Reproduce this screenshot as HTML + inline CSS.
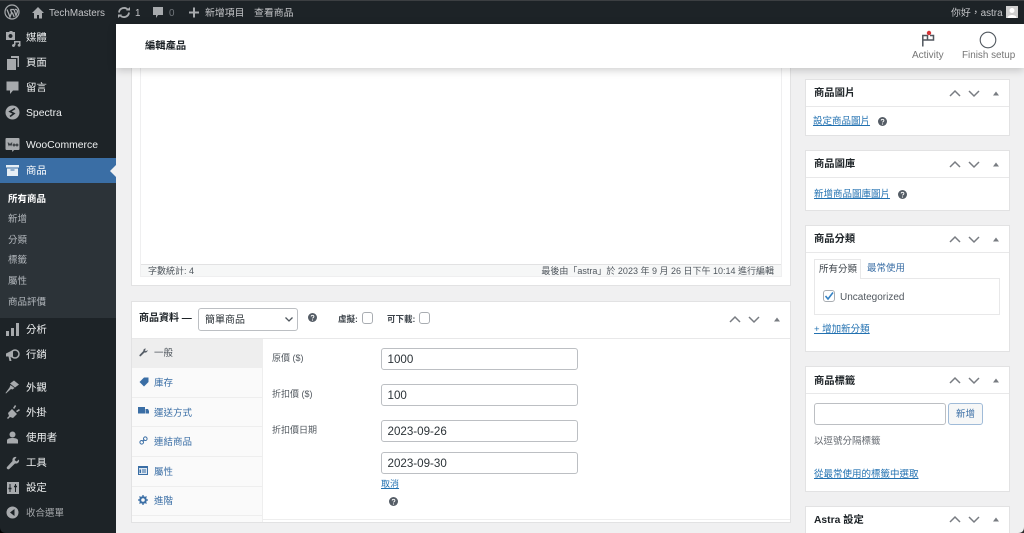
<!DOCTYPE html>
<html lang="zh-Hant"><head><meta charset="utf-8"><title>編輯產品</title>
<style>
*{box-sizing:border-box}
html,body{margin:0;padding:0;background:#f0f0f1}
body{width:1024px;height:533px;overflow:hidden;position:relative;font-family:"Liberation Sans","Noto Sans CJK TC",sans-serif;font-size:10px;color:#3c434a}
#w{position:absolute;left:0;top:0;width:1024px;height:533px;overflow:hidden;background:#f0f0f1;filter:blur(.35px)}
.a{position:absolute;white-space:nowrap}
svg{position:absolute;display:block}
#bar{left:0;top:0;width:1024px;height:24px;background:#1d2327;border-top:1px solid #3c3f42}
.bt{color:#c3c4c7;font-size:9.9px;line-height:12px;top:8px}
#side{left:0;top:24px;width:116px;height:509px;background:#1d2327}
.m{color:#eef0f1;font-size:10.4px;line-height:14px;left:26px}
.s{color:#b4b9be;font-size:9.5px;line-height:12px;left:8px}
.box{background:#fff;border:1px solid #e2e2e3}
.sh{font-weight:bold;color:#1d2327;font-size:10.3px;line-height:14px;left:814px}
.l{color:#2271b1;text-decoration:underline;font-size:9.5px;line-height:12px}
.tab{color:#3a6ea5;font-size:9.5px;line-height:12px;left:154px}
.tl{color:#50575e;font-size:9px;line-height:12px;left:272px}
.in{background:#fff;border:1px solid #bcbfc3;border-radius:3px;left:381px;width:197px;height:22px;color:#2c3338;font-size:11.6px;line-height:22px;padding-left:5.5px}
.hr{background:#e8e8e9;height:1px}
</style></head><body><div id="w">

<div class="a" id="bar"></div>
<svg style="left:4px;top:4px" width="16" height="16" viewBox="0 0 16 16"><circle cx="8" cy="8" r="7" fill="none" stroke="#a7aaad" stroke-width="1.2"/><path d="M3 5.5 6 13 7.6 8.6 6.5 5.5M6.500 5.500h3.500M10 5.500 12 11.500 13.500 7.500C13.500 6 12 5 11 5.500M8.300 8.500 10.200 13" fill="none" stroke="#a7aaad" stroke-width="1.3"/></svg>
<svg style="left:31px;top:6px" width="14" height="13" viewBox="0 0 14 13"><path d="M7 1 1 7h2v5.500h3V9h2v3.500h3V7h2z" fill="#a7aaad"/></svg>
<div class="a bt" style="left:49px">TechMasters</div>
<svg style="left:117px;top:6px" width="14" height="13" viewBox="0 0 14 13"><path d="M2 6.500A5 5 0 0 1 11 4M12 6.500A5 5 0 0 1 3 9" fill="none" stroke="#a7aaad" stroke-width="1.800"/><path d="M9 4.500h4V1zM5 8.500H1V12z" fill="#a7aaad"/></svg>
<div class="a bt" style="left:135px">1</div>
<svg style="left:152px;top:6px" width="12" height="13" viewBox="0 0 12 13"><path d="M1 1h10v8H6l-2 3V9H1z" fill="#a7aaad"/></svg>
<div class="a bt" style="left:169px;color:#72777c">0</div>
<svg style="left:189px;top:7px" width="10" height="11" viewBox="0 0 10 11"><path d="M5 .5v10M0 5.500h10" stroke="#a7aaad" stroke-width="2"/></svg>
<div class="a bt" style="left:205px">新增項目</div>
<div class="a bt" style="left:254px">查看商品</div>
<div class="a bt" style="left:951px">你好，astra</div>
<div class="a" style="left:1006px;top:6px;width:12px;height:12px;background:#cfcfcf"><svg width="12" height="12" viewBox="0 0 12 12"><circle cx="6" cy="4.500" r="2.500" fill="#fff"/><path d="M1.500 12c0-4 9-4 9 0z" fill="#fff"/></svg></div>

<div class="a" id="side"></div>
<svg style="left:5px;top:31px" width="16" height="16" viewBox="0 0 16 16"><path d="M1 1h3l1-1h2l1 1h2v8H1zM5.500 3a2 2 0 1 0 .01 0z" fill="#a7aaad" fill-rule="evenodd"/><path d="M10 14.500a1.500 1.500 0 1 1-1-1.400V10h6.500v3.500a1.500 1.500 0 1 1-1.500-.8V11.500h-3.500V14z" fill="#a7aaad"/></svg>
<div class="a m" style="top:32px">媒體</div>
<svg style="left:6px;top:56px" width="13" height="14" viewBox="0 0 13 14"><path d="M5 0h8v11h-1.500V2H5zM1 3h9v11H1z" fill="#a7aaad"/></svg>
<div class="a m" style="top:57px">頁面</div>
<svg style="left:6px;top:81px" width="13" height="14" viewBox="0 0 13 14"><path d="M.5.500h12v9H7l-3 3.500V9.500H.5z" fill="#a7aaad"/></svg>
<div class="a m" style="top:82px">留言</div>
<svg style="left:5px;top:105px" width="15" height="15" viewBox="0 0 15 15"><circle cx="7.500" cy="7.500" r="7" fill="#a7aaad"/><path d="M10 3.500 5 6.500 9 8.500 5 11.500" fill="none" stroke="#1d2327" stroke-width="1.600"/></svg>
<div class="a m" style="top:107px">Spectra</div>
<svg style="left:5px;top:137px" width="15" height="16" viewBox="0 0 15 16"><path d="M1.500 1h12a1 1 0 0 1 1 1v10a1 1 0 0 1-1 1H9l-1.500 2L7 13H1.500a1 1 0 0 1-1-1V2a1 1 0 0 1 1-1z" fill="#a7aaad"/><path d="M3 5.500l1 3 1-2 1 2 1-3M9 7a1 1 0 1 0 .01 0M12 7a1 1 0 1 0 .01 0" fill="none" stroke="#1d2327" stroke-width=".8"/></svg>
<div class="a m" style="top:139px">WooCommerce</div>
<div class="a" style="left:0;top:158px;width:116px;height:25px;background:#3a6ea5"></div>
<svg style="left:6px;top:165px" width="13" height="12" viewBox="0 0 13 12"><path d="M0 0h13v2.500H0zM1 3.500h11V11H1z" fill="#e6eef5"/><path d="M4.500 5h4" stroke="#3a6ea5"/></svg>
<div class="a m" style="top:165px;color:#fff">商品</div>
<div class="a" style="left:110px;top:165px;width:0;height:0;border:6px solid transparent;border-right-color:#f0f0f1;border-left:0"></div>
<div class="a" style="left:0;top:183px;width:116px;height:135px;background:#2c3338"></div>
<div class="a s" style="top:194px;color:#fff;font-weight:bold">所有商品</div>
<div class="a s" style="top:214px">新增</div>
<div class="a s" style="top:235px">分類</div>
<div class="a s" style="top:255px">標籤</div>
<div class="a s" style="top:276px">屬性</div>
<div class="a s" style="top:297px">商品評價</div>
<svg style="left:6px;top:323px" width="13" height="13" viewBox="0 0 13 13"><path d="M0 8h3v5H0zM5 5h3v8H5zM10 0h3v13h-3z" fill="#a7aaad"/></svg>
<div class="a m" style="top:324px">分析</div>
<svg style="left:5px;top:347px" width="15" height="15" viewBox="0 0 15 15"><path d="M1 6.500 8 3v8L5.500 10 6.500 14H4.500L3.500 9.500H1z" fill="#a7aaad"/><circle cx="10" cy="7" r="4" fill="none" stroke="#a7aaad" stroke-width="1.500"/></svg>
<div class="a m" style="top:349px">行銷</div>
<svg style="left:5px;top:380px" width="15" height="14" viewBox="0 0 15 14"><path d="M9 .500l5 4-4 3-5-4zM5.500 5l4 3-2 1.500L6 9 1 13.500.500 13 4.500 7.500z" fill="#a7aaad"/></svg>
<div class="a m" style="top:382px">外觀</div>
<svg style="left:6px;top:404px" width="14" height="15" viewBox="0 0 14 15"><path d="M1 14l2-2-1-3 4-4 5 5-4 4-3-1-2 2zM7 4l2-3 1.200 1-2 3zM10 7l3-2 1 1.200-3 2z" fill="#a7aaad"/></svg>
<div class="a m" style="top:407px">外掛</div>
<svg style="left:6px;top:431px" width="13" height="13" viewBox="0 0 13 13"><circle cx="6.500" cy="3.500" r="3" fill="#a7aaad"/><path d="M1 12.500V9.500C1 7.500 4 7 6.500 7s5.500.5 5.500 2.500v3z" fill="#a7aaad"/></svg>
<div class="a m" style="top:432px">使用者</div>
<svg style="left:6px;top:456px" width="14" height="14" viewBox="0 0 14 14"><path d="M13 3.500 10.500 5.500 8.500 4 10.500 1C8 .5 6 2 6.500 5L1 11c-1 1.500 1 3 2.300 2L9 7.500c3 .5 4.500-1.500 4-4z" fill="#a7aaad"/></svg>
<div class="a m" style="top:457px">工具</div>
<svg style="left:7px;top:482px" width="12" height="12" viewBox="0 0 12 12"><path d="M0 0h12v12H0z" fill="#a7aaad"/><path d="M3 2v8M8.500 2v8" stroke="#1d2327" stroke-width="1"/><path d="M1.500 6.500h3M7 4.500h3" stroke="#1d2327" stroke-width="1.500"/></svg>
<div class="a m" style="top:482px">設定</div>
<svg style="left:6px;top:506px" width="13" height="13" viewBox="0 0 13 13"><circle cx="6.500" cy="6.500" r="6" fill="#a7aaad"/><path d="M8.500 3v7L4 6.500z" fill="#1d2327"/></svg>
<div class="a m" style="top:507px;color:#a7aaad;font-size:9.500px">收合選單</div>

<!-- main editor box -->
<div class="a box" style="left:131px;top:60px;width:660px;height:226px"></div>
<div class="a" style="left:140px;top:60px;width:642px;height:217px;border:1px solid #efeff0;background:#fff"></div>
<div class="a" style="left:141px;top:264px;width:640px;height:12px;background:#f6f7f7;border-top:1px solid #e2e2e3"></div>
<div class="a" style="left:148px;top:265px;font-size:9px;line-height:12px;color:#50575e">字數統計: 4</div>
<div class="a" style="right:250px;top:265px;font-size:9px;line-height:12px;color:#50575e">最後由「astra」於 2023 年 9 月 26 日下午 10:14 進行編輯</div>

<!-- header -->
<div class="a" style="left:116px;top:24px;width:908px;height:44px;background:#fff;box-shadow:0 2px 8px rgba(0,0,0,.2)"></div>
<div class="a" style="left:145px;top:40px;font-size:10.3px;line-height:14px;font-weight:bold;color:#1d2327">編輯產品</div>
<svg style="left:921px;top:30px" width="14" height="17" viewBox="0 0 14 17"><path d="M1.800 16.500V5.500H6.500V10H2M6.500 10H12.500V5.500H9" fill="none" stroke="#50575e" stroke-width="1.500"/><circle cx="8" cy="3" r="2.200" fill="#d63638"/></svg>
<div class="a" style="left:912px;top:50px;font-size:10px;line-height:12px;color:#757575">Activity</div>
<svg style="left:979px;top:31px" width="18" height="18" viewBox="0 0 18 18"><circle cx="9" cy="9" r="7.800" fill="none" stroke="#50575e" stroke-width="1.100"/></svg>
<div class="a" style="left:962px;top:50px;font-size:9.900px;line-height:12px;color:#757575">Finish setup</div>

<!-- product data -->
<div class="a box" style="left:131px;top:301px;width:660px;height:222px"></div>
<div class="a" style="left:139px;top:312px;font-size:10px;line-height:14px;font-weight:bold;color:#1d2327">商品資料 —</div>
<div class="a" style="left:198px;top:308px;width:100px;height:23px;background:#fff;border:1px solid #bcbfc3;border-radius:3px;font-size:10px;line-height:23px;padding-left:6px;color:#2c3338">簡單商品</div>
<svg style="left:284px;top:316px" width="10" height="7" viewBox="0 0 10 7"><path d="M1.500 1.500 5 5l3.500-3.500" fill="none" stroke="#50575e" stroke-width="1.300"/></svg>
<svg style="left:308px;top:313px" width="9" height="9" viewBox="0 0 9 9"><circle cx="4.500" cy="4.500" r="4.500" fill="#555d66"/><path d="M3.200 3.500c0-1.600 2.700-1.600 2.700 0 0 1-1.300 1-1.300 2" fill="none" stroke="#fff" stroke-width=".9"/><circle cx="4.500" cy="7" r=".6" fill="#fff"/></svg>
<div class="a" style="left:338px;top:313px;font-size:8.500px;line-height:12px;font-weight:bold;color:#3c434a">虛擬:</div>
<div class="a" style="left:362px;top:312px;width:11px;height:12px;border:1px solid #a9adb2;border-radius:3px;background:#fff"></div>
<div class="a" style="left:387px;top:313px;font-size:8.500px;line-height:12px;font-weight:bold;color:#3c434a">可下載:</div>
<div class="a" style="left:419px;top:312px;width:11px;height:12px;border:1px solid #a9adb2;border-radius:3px;background:#fff"></div>
<svg style="left:729px;top:315px" width="56" height="9" viewBox="0 0 56 9"><path d="M1 7l5-5 5 5M20 2l5 5 5-5" fill="none" stroke="#787c82" stroke-width="1.500"/><path d="M45 6.500l3-4 3 4z" fill="#787c82"/></svg>

<div class="a hr" style="left:132px;top:338px;width:658px"></div>
<div class="a" style="left:132px;top:339px;width:131px;height:183px;background:#fafafa;border-right:1px solid #eee"></div>
<div class="a" style="left:132px;top:339px;width:130px;height:29px;background:#eee"></div>
<div class="a hr" style="left:132px;top:397px;width:130px;background:#eee"></div>
<div class="a hr" style="left:132px;top:426px;width:130px;background:#eee"></div>
<div class="a hr" style="left:132px;top:456px;width:130px;background:#eee"></div>
<div class="a hr" style="left:132px;top:486px;width:130px;background:#eee"></div>
<div class="a hr" style="left:132px;top:515px;width:130px;background:#eee"></div>
<svg style="left:139px;top:348px" width="9" height="9" viewBox="0 0 9 9"><path d="M8.500 2 7 3.300 5.800 2.300 7 .7C5.500.2 4.200 1.200 4.300 3L.5 7c-.5.700.5 1.700 1.200 1.200L5.500 4.500C7.500 4.900 8.800 3.500 8.500 2z" fill="#555d66"/></svg>
<div class="a" style="left:154px;top:348px;font-size:9.500px;line-height:12px;color:#50575e">一般</div>
<svg style="left:139px;top:377px" width="10" height="10" viewBox="0 0 10 10"><path d="M5 .5h4.500V5L5 9.500.500 5z" fill="#3a6ea5"/></svg>
<div class="a tab" style="top:378px">庫存</div>
<svg style="left:138px;top:407px" width="11" height="8" viewBox="0 0 11 8"><path d="M0 0h7v6.500H0zM7.500 2H10l1 2v2.500H7.500z" fill="#3a6ea5"/></svg>
<div class="a tab" style="top:408px">運送方式</div>
<svg style="left:139px;top:436px" width="9" height="9" viewBox="0 0 9 9"><path d="M3.500 5.500 5.500 3.500" stroke="#3a6ea5" stroke-width="1"/><circle cx="2.700" cy="6.300" r="1.800" fill="none" stroke="#3a6ea5"/><circle cx="6.300" cy="2.700" r="1.800" fill="none" stroke="#3a6ea5"/></svg>
<div class="a tab" style="top:437px">連結商品</div>
<svg style="left:138px;top:466px" width="10" height="9" viewBox="0 0 10 9"><path d="M0 0h10v9H0z" fill="#3a6ea5"/><path d="M1 2h8v6H1z" fill="#dfe8f1"/><path d="M4 4h4M4 6h4" stroke="#3a6ea5"/><path d="M1.500 3.500h1.500v3.500H1.500z" fill="#3a6ea5"/></svg>
<div class="a tab" style="top:467px">屬性</div>
<svg style="left:138px;top:495px" width="10" height="10" viewBox="0 0 10 10"><circle cx="5" cy="5" r="2.800" fill="none" stroke="#3a6ea5" stroke-width="2"/><path d="M5 0v10M0 5h10M1.500 1.500l7 7M8.500 1.500l-7 7" stroke="#3a6ea5" stroke-width="1.300" stroke-dasharray="1.800 6.400"/></svg>
<div class="a tab" style="top:496px">進階</div>

<div class="a tl" style="top:352px">原價 ($)</div>
<div class="a in" style="top:348px">1000</div>
<div class="a tl" style="top:388px">折扣價 ($)</div>
<div class="a in" style="top:384px">100</div>
<div class="a tl" style="top:424px">折扣價日期</div>
<div class="a in" style="top:420px">2023-09-26</div>
<div class="a in" style="top:452px">2023-09-30</div>
<div class="a l" style="left:381px;top:478px;font-size:9px">取消</div>
<svg style="left:389px;top:497px" width="9" height="9" viewBox="0 0 9 9"><circle cx="4.500" cy="4.500" r="4.500" fill="#555d66"/><path d="M3.200 3.500c0-1.600 2.700-1.600 2.700 0 0 1-1.300 1-1.300 2" fill="none" stroke="#fff" stroke-width=".9"/><circle cx="4.500" cy="7" r=".6" fill="#fff"/></svg>
<div class="a hr" style="left:263px;top:519px;width:527px;background:#eee"></div>

<!-- side boxes -->
<div class="a box" style="left:805px;top:79px;width:205px;height:57px"></div>
<div class="a hr" style="left:806px;top:106px;width:203px"></div>
<div class="a sh" style="top:87px">商品圖片</div>
<svg style="left:949px;top:89px" width="56" height="9" viewBox="0 0 56 9"><path d="M1 7l5-5 5 5M20 2l5 5 5-5" fill="none" stroke="#787c82" stroke-width="1.500"/><path d="M44 6.500l3-4 3 4z" fill="#787c82"/></svg>
<div class="a l" style="left:813px;top:116px">設定商品圖片</div>
<svg style="left:878px;top:117px" width="9" height="9" viewBox="0 0 9 9"><circle cx="4.500" cy="4.500" r="4.500" fill="#555d66"/><path d="M3.200 3.500c0-1.600 2.700-1.600 2.700 0 0 1-1.300 1-1.300 2" fill="none" stroke="#fff" stroke-width=".9"/><circle cx="4.500" cy="7" r=".6" fill="#fff"/></svg>

<div class="a box" style="left:805px;top:150px;width:205px;height:61px"></div>
<div class="a hr" style="left:806px;top:177px;width:203px"></div>
<div class="a sh" style="top:158px">商品圖庫</div>
<svg style="left:949px;top:160px" width="56" height="9" viewBox="0 0 56 9"><path d="M1 7l5-5 5 5M20 2l5 5 5-5" fill="none" stroke="#787c82" stroke-width="1.500"/><path d="M44 6.500l3-4 3 4z" fill="#787c82"/></svg>
<div class="a l" style="left:814px;top:189px">新增商品圖庫圖片</div>
<svg style="left:898px;top:190px" width="9" height="9" viewBox="0 0 9 9"><circle cx="4.500" cy="4.500" r="4.500" fill="#555d66"/><path d="M3.200 3.500c0-1.600 2.700-1.600 2.700 0 0 1-1.300 1-1.300 2" fill="none" stroke="#fff" stroke-width=".9"/><circle cx="4.500" cy="7" r=".6" fill="#fff"/></svg>

<div class="a box" style="left:805px;top:225px;width:205px;height:127px"></div>
<div class="a hr" style="left:806px;top:252px;width:203px"></div>
<div class="a sh" style="top:233px">商品分類</div>
<svg style="left:949px;top:235px" width="56" height="9" viewBox="0 0 56 9"><path d="M1 7l5-5 5 5M20 2l5 5 5-5" fill="none" stroke="#787c82" stroke-width="1.500"/><path d="M44 6.500l3-4 3 4z" fill="#787c82"/></svg>
<div class="a" style="left:814px;top:278px;width:186px;height:37px;border:1px solid #e8e8e9;background:#fff"></div>
<div class="a" style="left:814px;top:259px;width:47px;height:20px;border:1px solid #e8e8e9;border-bottom:0;background:#fff;font-size:9.500px;line-height:19px;padding-left:4px;color:#3c434a">所有分類</div>
<div class="a" style="left:867px;top:263px;font-size:9.500px;line-height:12px;color:#3a6ea5">最常使用</div>
<div class="a" style="left:823px;top:290px;width:12px;height:12px;border:1px solid #a9adb2;border-radius:3px;background:#fff"><svg style="left:0;top:0" width="10" height="10" viewBox="0 0 10 10"><path d="M1.500 5 4 8l5-6.500" fill="none" stroke="#3582c4" stroke-width="1.600"/></svg></div>
<div class="a" style="left:840px;top:292px;font-size:10px;line-height:12px;color:#50575e">Uncategorized</div>
<div class="a l" style="left:814px;top:324px">+ 增加新分類</div>

<div class="a box" style="left:805px;top:366px;width:205px;height:126px"></div>
<div class="a hr" style="left:806px;top:393px;width:203px"></div>
<div class="a sh" style="top:375px">商品標籤</div>
<svg style="left:949px;top:376px" width="56" height="9" viewBox="0 0 56 9"><path d="M1 7l5-5 5 5M20 2l5 5 5-5" fill="none" stroke="#787c82" stroke-width="1.500"/><path d="M44 6.500l3-4 3 4z" fill="#787c82"/></svg>
<div class="a" style="left:814px;top:403px;width:132px;height:22px;border:1px solid #bcbfc3;border-radius:3px;background:#fff"></div>
<div class="a" style="left:948px;top:403px;width:35px;height:22px;border:1px solid #a0bbd8;border-radius:3px;background:#f6f7f7;font-size:9.500px;line-height:21px;text-align:center;color:#3a6ea5">新增</div>
<div class="a" style="left:814px;top:436px;font-size:9.500px;line-height:12px;color:#646970">以逗號分隔標籤</div>
<div class="a l" style="left:814px;top:469px">從最常使用的標籤中選取</div>

<div class="a box" style="left:805px;top:506px;width:205px;height:30px"></div>
<div class="a sh" style="top:514px">Astra 設定</div>
<svg style="left:949px;top:515px" width="56" height="9" viewBox="0 0 56 9"><path d="M1 7l5-5 5 5M20 2l5 5 5-5" fill="none" stroke="#787c82" stroke-width="1.500"/><path d="M44 6.500l3-4 3 4z" fill="#787c82"/></svg>

<svg style="left:1018px;top:527px" width="6" height="6" viewBox="0 0 6 6"><path d="M6 0v6H0C4 6 6 4 6 0z" fill="#2b2b2b"/></svg>
<svg style="left:0;top:527px" width="6" height="6" viewBox="0 0 6 6"><path d="M0 0v6h6C2 6 0 4 0 0z" fill="#000"/></svg>
</div></body></html>
